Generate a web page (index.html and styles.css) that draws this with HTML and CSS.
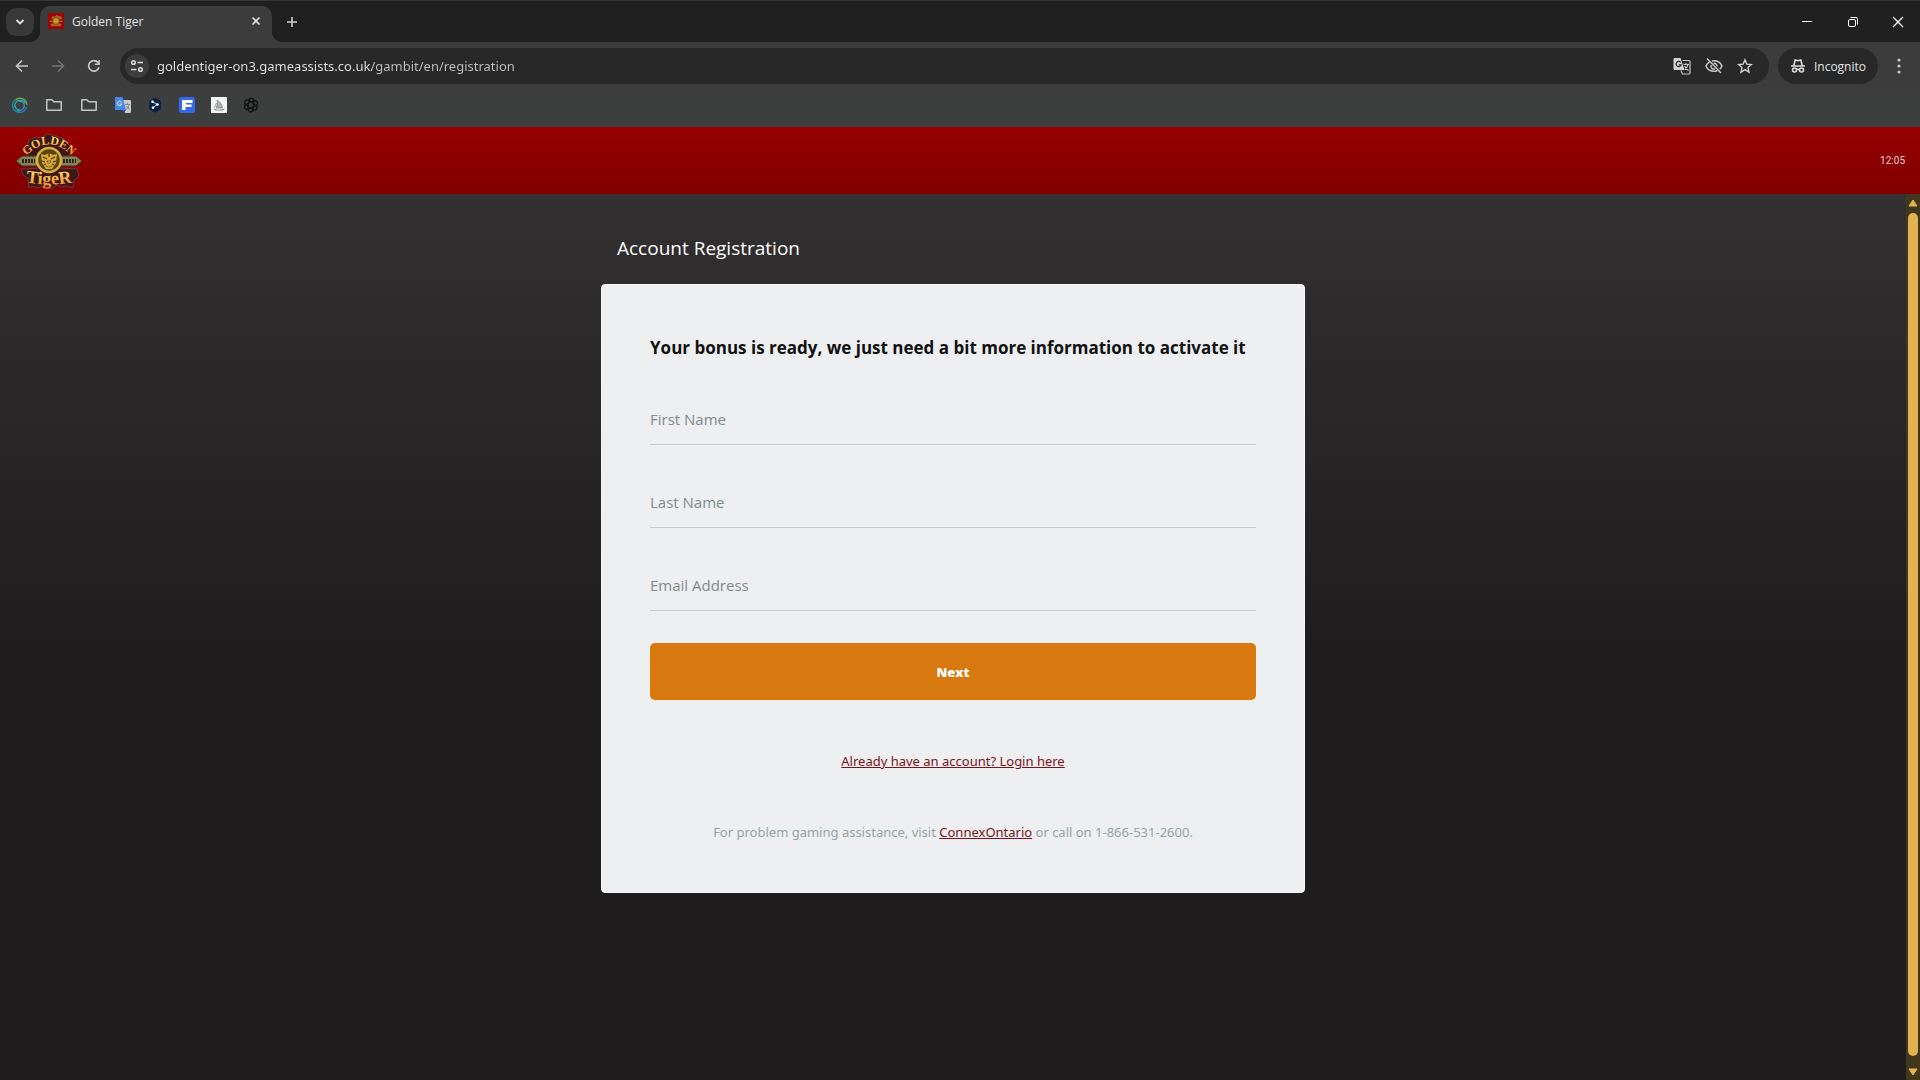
FILE: index.html
```html
<!DOCTYPE html>
<html lang="en">
<head>
  <meta charset="UTF-8">
  <meta name="viewport" content="width=device-width, initial-scale=1.0">
  <title>Golden Tiger</title>
  <link rel="stylesheet" href="styles.css">
</head>
<body>

  <!-- Tab strip -->
  <div class="tab-strip">
    <button class="tab-search" aria-label="Search tabs">
      <svg width="10" height="10" viewBox="0 0 10 10"><path d="M1.500 3l3.500 3.500L8.500 3" fill="none" stroke="#e3e3e3" stroke-width="1.800"/></svg>
    </button>
    <div class="tab">
      <svg width="16" height="16" viewBox="0 0 16 16">
        <rect width="16" height="16" fill="#9c0605"/>
        <path d="M3 5l2-2 2 .5L9 2l2 1.500 2-.5 1 2.500-2 1H5zM1.500 7.500h13v1.500h-13zM2.500 11l3.500-1h4l3.500 1-1.500 3-2-1.500-2 1-2-1-2 1.500z" fill="#a5652c"/>
        <circle cx="8" cy="8" r="3.200" fill="#d1a732" stroke="#6b3512" stroke-width=".7"/>
        <path d="M6.500 7.500h1M8.500 7.500h1M7.500 9.500h1" stroke="#7a5216" stroke-width=".8"/>
      </svg>
      <span class="tab-title">Golden Tiger</span>
      <button class="icon-btn" aria-label="Close tab">
        <svg width="10" height="10" viewBox="0 0 10 10"><path d="M1.500 1.500l7 7M8.500 1.500l-7 7" stroke="#e3e3e3" stroke-width="1.600"/></svg>
      </button>
    </div>
    <button class="icon-btn new-tab" aria-label="New tab">
      <svg width="12" height="12" viewBox="0 0 12 12"><path d="M6 1v10M1 6h10" stroke="#d0d0d0" stroke-width="1.600"/></svg>
    </button>
    <div class="window-controls">
      <button class="icon-btn" aria-label="Minimize">
        <svg width="12" height="12" viewBox="0 0 12 12"><path d="M1 5.500h10" stroke="#fff"/></svg>
      </button>
      <button class="icon-btn" aria-label="Restore">
        <svg width="12" height="12" viewBox="0 0 12 12" fill="none" stroke="#fff"><rect x="1.500" y="3.500" width="7" height="7" rx="1.500"/><path d="M3.500 1.500H9a1.500 1.500 0 0 1 1.500 1.500v5.500"/></svg>
      </button>
      <button class="icon-btn" aria-label="Close">
        <svg width="12" height="12" viewBox="0 0 12 12"><path d="M1 1l10 10M11 1L1 11" stroke="#fff" stroke-width="1.300"/></svg>
      </button>
    </div>
  </div>

  <!-- Address bar -->
  <div class="toolbar">
    <div class="nav-buttons">
      <button class="icon-btn" aria-label="Back">
        <svg width="14" height="14" viewBox="0 0 14 14"><path d="M13 7H2M7 1.500L1.500 7 7 12.500" fill="none" stroke="#c7c7c7" stroke-width="1.600"/></svg>
      </button>
      <button class="icon-btn" aria-label="Forward">
        <svg width="14" height="14" viewBox="0 0 14 14"><path d="M1 7h11M7 1.500L12.500 7 7 12.500" fill="none" stroke="#747474" stroke-width="1.600"/></svg>
      </button>
      <button class="icon-btn" aria-label="Reload">
        <svg width="14" height="14" viewBox="0 0 14 14"><path d="M12 8.200A5.300 5.300 0 1 1 11 3.500L12.500 5" fill="none" stroke="#c7c7c7" stroke-width="1.700"/><path d="M12.800 1v5H7.800V4.500h3.500V1z" fill="#c7c7c7"/></svg>
      </button>
    </div>
    <div class="omnibox">
      <button class="site-info" aria-label="Site information">
        <svg width="14" height="14" viewBox="0 0 14 14" fill="none" stroke="#dcdcdc" stroke-width="1.500"><circle cx="3.500" cy="3.500" r="1.800"/><path d="M7.500 3.500H13M1 10.500h5.500"/><circle cx="10.500" cy="10.500" r="1.800"/></svg>
      </button>
      <input class="url" type="text" aria-label="Address" value="goldentiger-on3.gameassists.co.uk/gambit/en/registration">
      <button class="icon-btn" aria-label="Translate">
        <svg width="18" height="18" viewBox="0 0 18 18">
          <path d="M1.500 1h6l4 12h-10A1 1 0 0 1 .5 12V2a1 1 0 0 1 1-1z" fill="#d3d3d3"/>
          <path d="M7.800 5.500A2.600 2.600 0 1 0 8.200 7.800H5.800" fill="none" stroke="#282828" stroke-width="1.200"/>
          <path d="M9.500 3.500H16a1 1 0 0 1 1 1V16a1 1 0 0 1-1 1H9.500L8 13.500M10.500 7.500H16M13 6v1.500M15 7.500c-.5 2.500-2 4-3.500 5M11.500 9c1 2 2.500 3.500 4 4.500" fill="none" stroke="#c7c7c7" stroke-width="1.200"/>
        </svg>
      </button>
      <button class="icon-btn" aria-label="Third-party cookies blocked">
        <svg width="18" height="18" viewBox="0 0 18 18" fill="none" stroke="#c7c7c7" stroke-width="1.500">
          <path d="M4.500 4.800C2.800 5.800 1.600 7.300 1 9c1.300 3.200 4.300 5.300 8 5.300 1.200 0 2.400-.2 3.400-.6M7 3.900c.6-.1 1.300-.2 2-.2 3.700 0 6.700 2.100 8 5.300-.5 1.300-1.300 2.400-2.300 3.200"/>
          <path d="M8.500 6.200A3 3 0 0 1 12 9.500M6.200 8a3 3 0 0 0 3.800 3.900M2 1.500L16 16"/>
        </svg>
      </button>
      <button class="icon-btn" aria-label="Bookmark this tab">
        <svg width="16" height="16" viewBox="0 0 16 16"><path d="M8 1.800l1.800 4.300 4.700.4-3.500 3.100 1 4.600L8 11.700l-4 2.500 1-4.600L1.500 6.500l4.700-.4z" fill="none" stroke="#d0d0d0" stroke-width="1.400"/></svg>
      </button>
    </div>
    <button class="incognito">
      <svg width="16" height="16" viewBox="0 0 16 16" fill="none" stroke="#dedede" stroke-width="1.600">
        <path d="M1 8h14M3.800 7.500L5.200 2l2.800.7 2.800-.7 1.400 5.500"/>
        <circle cx="4.500" cy="12" r="2"/><circle cx="11.500" cy="12" r="2"/><path d="M6.300 11.800q1.700-1 3.400 0"/>
      </svg>
      Incognito
    </button>
    <button class="icon-btn menu-btn" aria-label="Menu">
      <svg width="4" height="16" viewBox="0 0 4 16" fill="#c7c7c7"><circle cx="2" cy="2" r="1.600"/><circle cx="2" cy="8" r="1.600"/><circle cx="2" cy="14" r="1.600"/></svg>
    </button>
  </div>

  <!-- Bookmarks -->
  <nav class="bookmarks">
    <a href="#" aria-label="Swirl">
      <svg width="16" height="16" viewBox="0 0 16 16" fill="none" stroke-width="1.300">
        <path d="M14.500 10A7 7 0 0 1 2 12.500 7 7 0 0 1 3 3" stroke="#2583b8"/>
        <path d="M3.500 3a7 7 0 0 1 11.500 5" stroke="#63a84e"/>
        <path d="M13.500 6.500A6 6 0 0 0 3.200 6 5 5 0 0 0 8 13" stroke="#2fb09b"/>
        <path d="M6.500 4.500a4.500 4.500 0 0 1 5.800 5c-1 3-4 5-7.500 4" stroke="#3b91cf"/>
      </svg>
    </a>
    <a href="#" aria-label="Folder">
      <svg width="18" height="14" viewBox="0 0 18 14"><path d="M1.800 12.200V1.800h5l2 2h7.400v8.400z" fill="none" stroke="#c4c4c4" stroke-width="1.500" stroke-linejoin="round"/></svg>
    </a>
    <a href="#" aria-label="Folder">
      <svg width="18" height="14" viewBox="0 0 18 14"><path d="M1.800 12.200V1.800h5l2 2h7.400v8.400z" fill="none" stroke="#c4c4c4" stroke-width="1.500" stroke-linejoin="round"/></svg>
    </a>
    <a href="#" aria-label="Translate">
      <svg width="16" height="16" viewBox="0 0 16 16">
        <path d="M6 3h9a1 1 0 0 1 1 1v11a1 1 0 0 1-1 1h-5z" fill="#c9cbcd"/>
        <path d="M10 7.500h5M12.500 6v1.500M14 7.500c0 2-1.500 4-3 5M11.500 9l3 3.500" stroke="#888" fill="none"/>
        <path d="M1 0h6.500L11 13H1a1 1 0 0 1-1-1V1a1 1 0 0 1 1-1z" fill="#4888ee"/>
        <path d="M6.300 5A2.200 2.200 0 1 0 6.700 7H4.700" fill="none" stroke="#e8f0ff"/>
        <path d="M8 13h3l-2 3z" fill="#3157a8"/>
      </svg>
    </a>
    <a href="#" aria-label="Shell">
      <svg width="16" height="16" viewBox="0 0 16 16"><path d="M8 .500l6 3.500v8l-6 3.800L2 12V4z" fill="#0d2340"/><path d="M5 4.500l5 2.800-4 3.500" fill="none" stroke="#82c4ec" stroke-width="1.100"/><g fill="#fff"><circle cx="5.500" cy="4.800" r="1.200"/><circle cx="10.500" cy="7.500" r="1.300"/><circle cx="6" cy="10.700" r="1.200"/></g></svg>
    </a>
    <a href="#" aria-label="Figures">
      <svg width="16" height="16" viewBox="0 0 16 16"><rect width="16" height="16" rx="2.500" fill="#3668ef"/><path d="M3 3h10.500v3H7v1.500h5.500v2.500H6.500v3H3z" fill="#fff"/></svg>
    </a>
    <a href="#" aria-label="Sailboat">
      <svg width="16" height="16" viewBox="0 0 16 16"><rect width="16" height="16" fill="#f4f4f4"/><path d="M6 3c3.500 2 5 5 5.500 8H5c1.500-3 1.800-5 1-8zM3 11c1-2 2-3.500 2.500-5" fill="#aeb2b4" stroke="#777c7f" stroke-width=".7"/><path d="M2 11.500c3 1.500 8 1.500 12 0l-2 2H4z" fill="#85898b"/></svg>
    </a>
    <a href="#" aria-label="Chat">
      <svg width="16" height="16" viewBox="-1 -1 18 18" fill="none" stroke="#111" stroke-width="1.500">
        <path id="petal" d="M8 5.200L11 3.500a2.800 2.800 0 0 1 3 4.800L9 11.200"/>
        <use href="#petal" transform="rotate(60 8 8)"/>
        <use href="#petal" transform="rotate(120 8 8)"/>
        <use href="#petal" transform="rotate(180 8 8)"/>
        <use href="#petal" transform="rotate(240 8 8)"/>
        <use href="#petal" transform="rotate(300 8 8)"/>
      </svg>
    </a>
  </nav>

  <!-- Casino header -->
  <header>
    <svg class="logo" width="68" height="60" viewBox="0 0 68 60" role="img" aria-label="Golden Tiger">
      <defs>
        <path id="arcTop" d="M11 25Q34 2 57 25"/>
        <path id="arcBottom" d="M8 51Q34 56 60 51"/>
        <linearGradient id="gold" x1="0" y1="0" x2="0" y2="1">
          <stop offset="0" stop-color="#ffed7a"/>
          <stop offset="1" stop-color="#ee8124"/>
        </linearGradient>
      </defs>
      <path d="M9 21L14 9l7-3 5 1 6-4 10 2 8 4 6 8-1 7-9 2H15z" fill="#3c1715" stroke="#7c3340"/>
      <path d="M6 38l22-1h14l20 1 2 7-5 5-1 7-6-2-5 1-5-2-6 4-6-3-8 2-5-2-3 2-1-10-5-3z" fill="#3c1715" stroke="#7c3340"/>
      <path d="M1 30l6-5h54l6 5-6 5H7z" fill="#8b8054" stroke="#39331d"/>
      <path d="M7 30h13M48 30h13" stroke="#2c2a20" stroke-width="4" stroke-dasharray="2 1"/>
      <circle cx="34" cy="29" r="12" fill="#5b4312" stroke="#d7b03b" stroke-width="2.500"/>
      <path d="M26 23l4 1 4-2 4 2 4-1-1 9-4 6h-6l-4-6z" fill="#d8a935"/>
      <path d="M28 26l4 2M40 26l-4 2M34 22v4M27 30l3 1M41 30l-3 1M29 34l2-1M39 34l-2-1" stroke="#4c300d" stroke-width="1.200"/>
      <path d="M32 30h4l-1 2h-2zM31 35q3 2 6 0" fill="#fae59a" stroke="#4c300d" stroke-width=".7"/>
      <text class="logo-top"><textPath href="#arcTop" startOffset="50%">GOLDEN</textPath></text>
      <text class="logo-bottom"><textPath href="#arcBottom" startOffset="50%">TigeR</textPath></text>
    </svg>
    <time>12:05</time>
  </header>

  <div class="page">
    <main>
      <div class="registration">
        <h1>Account Registration</h1>
        <form class="card">
          <h2>Your bonus is ready, we just need a bit more information to activate it</h2>
          <input type="text" class="field" placeholder="First Name" aria-label="First Name">
          <input type="text" class="field" placeholder="Last Name" aria-label="Last Name">
          <input type="email" class="field" placeholder="Email Address" aria-label="Email Address">
          <button type="button" class="next-btn">Next</button>
          <p class="login"><a href="#">Already have an account? Login here</a></p>
          <p class="help">For problem gaming assistance, visit <a href="#">ConnexOntario</a> or call on 1-866-531-2600.</p>
        </form>
      </div>
    </main>
    <div class="scrollbar">
      <svg width="10" height="8" viewBox="0 0 10 8"><path d="M5 1l4 6H1z" fill="#e3b352" stroke="#e3b352" stroke-linejoin="round"/></svg>
      <div class="thumb"></div>
      <svg width="10" height="8" viewBox="0 0 10 8"><path d="M5 7l4-6H1z" fill="#e3b352" stroke="#e3b352" stroke-linejoin="round"/></svg>
    </div>
  </div>

</body>
</html>
```
FILE: styles.css
```css
* {
  box-sizing: border-box;
}

body {
  margin: 0;
  min-height: 100vh;
  display: flex;
  flex-direction: column;
  background: #1e1c1d;
  font-family: 'Open Sans', 'Noto Sans', sans-serif;
  font-size: 13px;
}

button {
  font-family: inherit;
  border: none;
  padding: 0;
  cursor: pointer;
}

svg {
  display: block;
  flex-shrink: 0;
}

.icon-btn {
  background: none;
  display: flex;
  align-items: center;
  justify-content: center;
}

/* Tab strip */
.tab-strip {
  height: 42px;
  background: #202020;
  border-top: 1px solid #343434;
  display: flex;
  align-items: center;
  padding-left: 6px;
}

.tab-search {
  width: 28px;
  height: 28px;
  border-radius: 10px;
  background: #383838;
  display: flex;
  align-items: center;
  justify-content: center;
}

.tab {
  position: relative;
  align-self: flex-end;
  width: 232px;
  height: 36px;
  margin-left: 6px;
  padding: 0 11px 6px 8px;
  border-radius: 10px 10px 0 0;
  background: #3c3c3c;
  display: flex;
  align-items: center;
  gap: 8px;
}

/* Curved feet of the active tab */
.tab::before,
.tab::after {
  content: '';
  position: absolute;
  bottom: 0;
  width: 10px;
  height: 10px;
}

.tab::before {
  right: 100%;
  background: radial-gradient(circle at 0 0, transparent 10px, #3c3c3c 10px);
}

.tab::after {
  left: 100%;
  background: radial-gradient(circle at 100% 0, transparent 10px, #3c3c3c 10px);
}

.tab-title {
  flex: 1;
  font-size: 12px;
  color: #e3e3e3;
}

.new-tab {
  margin-left: 14px;
}

.window-controls {
  margin-left: auto;
  display: flex;
}

.window-controls .icon-btn {
  width: 46px;
  height: 40px;
}

.window-controls .icon-btn:last-child {
  width: 44px;
}

/* Address bar */
.toolbar {
  height: 48px;
  padding: 0 19px 0 15px;
  background: #3c3c3c;
  display: flex;
  align-items: center;
}

.nav-buttons {
  display: flex;
  gap: 22px;
  margin-right: 19px;
}

.omnibox {
  flex: 1;
  height: 36px;
  border-radius: 18px;
  background: #282828;
  display: flex;
  align-items: center;
  gap: 14px;
  padding: 0 16px 0 5px;
}

.site-info {
  width: 24px;
  height: 24px;
  border-radius: 50%;
  background: #3c3c3c;
  display: flex;
  align-items: center;
  justify-content: center;
}

/* The host is brighter than the path */
.url {
  flex: 1;
  margin-left: -6px;
  padding: 0;
  border: none;
  outline: none;
  font-family: 'Noto Sans', sans-serif;
  font-size: 13px;
  color: transparent;
  background: linear-gradient(90deg, #e6e6e6 215px, #c0c0c0 215px);
  -webkit-background-clip: text;
  background-clip: text;
}

.incognito {
  height: 36px;
  margin-left: 9px;
  padding: 0 12px;
  border-radius: 18px;
  background: #282828;
  color: #e3e3e3;
  font-size: 12px;
  display: flex;
  align-items: center;
  gap: 8px;
}

.menu-btn {
  margin-left: 19px;
}

/* Bookmarks */
.bookmarks {
  height: 37px;
  padding: 0 0 8px 12px;
  background: #3d3f3f;
  display: flex;
  align-items: center;
  gap: 17px;
}

.bookmarks a {
  display: block;
}

.bookmarks a:nth-child(n + 5) {
  margin-left: -1px;
}

/* Casino header */
header {
  height: 67px;
  padding: 0 15px;
  background: linear-gradient(#960000, #800000);
  display: flex;
  align-items: center;
  justify-content: space-between;
}

header time {
  font-family: Roboto, sans-serif;
  font-size: 10px;
  color: #e8cfcf;
}

.logo text {
  font-family: 'Liberation Serif', serif;
  font-weight: bold;
  text-anchor: middle;
  fill: url(#gold);
}

.logo .logo-top {
  font-size: 12px;
}

.logo .logo-bottom {
  font-size: 18px;
}

.page {
  flex: 1;
  display: flex;
}

main {
  flex: 1;
  padding: 36px 20px 60px;
  background: linear-gradient(#333031, #1e1c1d 460px);
}

.registration {
  max-width: 704px;
  margin: 0 auto;
}

h1 {
  margin: 0 0 18px;
  padding-left: 16px;
  font-size: 19px;
  line-height: 36px;
  font-weight: 400;
  color: #fff;
}

.card {
  padding: 48px;
  border: 1px solid #f8f8f8;
  border-radius: 4px;
  background: #eeeff1;
}

h2 {
  margin: 0 0 31px;
  font-size: 17px;
  line-height: 30px;
  font-weight: 700;
  color: #111;
}

.field {
  display: block;
  width: 100%;
  height: 51px;
  margin-bottom: 32px;
  padding: 0;
  border: none;
  border-bottom: 1px solid #c6cccf;
  border-radius: 0;
  outline: none;
  background: none;
  font-family: inherit;
  font-size: 15px;
  color: #111;
}

.field::placeholder {
  color: #7f8c8d;
  opacity: 1;
}

.next-btn {
  display: block;
  width: 100%;
  height: 57px;
  border-radius: 5px;
  background: #d7790f;
  color: #fff;
  font-size: 13px;
  font-weight: 800;
}

.card p {
  margin: 0;
  text-align: center;
  font-family: 'Noto Sans', sans-serif;
  line-height: 24px;
  color: #95a5a6;
}

.card a {
  color: #7a1418;
}

.card .login {
  margin: 49px 0 47px;
}

/* Page scrollbar */
.scrollbar {
  width: 14px;
  padding: 5px 0 4px;
  background: #41371c;
  display: flex;
  flex-direction: column;
  align-items: center;
  gap: 6px;
}

.thumb {
  flex: 1;
  width: 10px;
  margin-bottom: 6px;
  border-radius: 5px;
  background: #e3b352;
}
```
